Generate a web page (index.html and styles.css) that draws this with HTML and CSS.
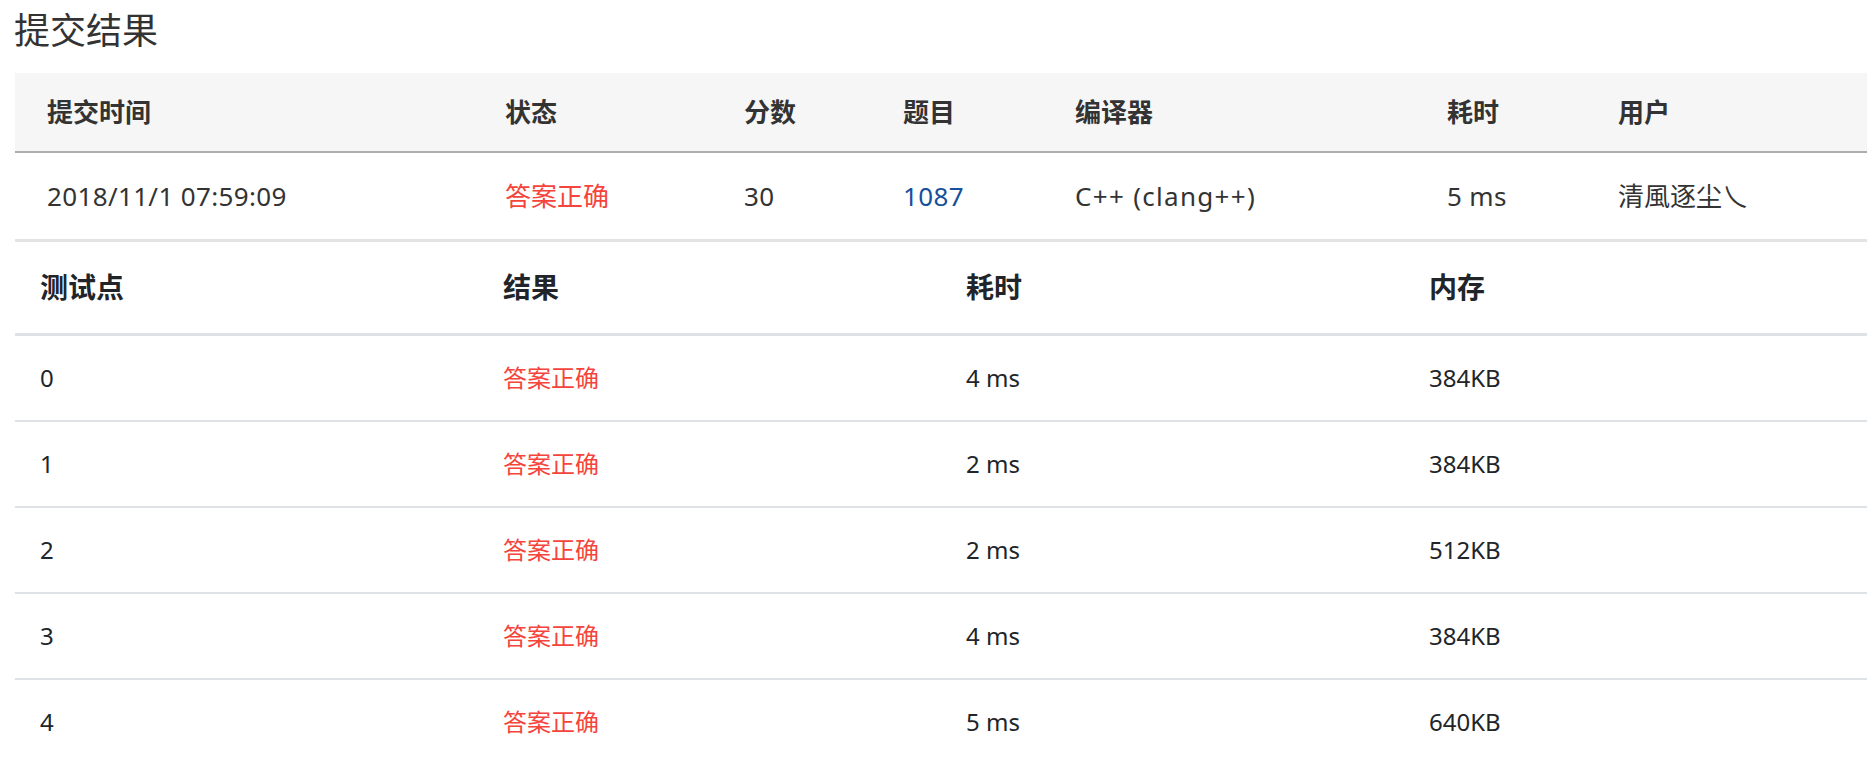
FILE: index.html
```html
<!DOCTYPE html>
<html lang="zh-CN">
<head>
<meta charset="utf-8">
<title>提交结果</title>
<link rel="stylesheet" href="styles.css">
</head>
<body>
<div class="page">
  <h1 class="title">提交结果</h1>
  <table class="submit-table">
    <colgroup>
      <col class="c1"><col class="c2"><col class="c3"><col class="c4"><col class="c5"><col class="c6"><col class="c7">
    </colgroup>
    <thead>
      <tr>
        <th>提交时间</th><th>状态</th><th>分数</th><th>题目</th><th>编译器</th><th>耗时</th><th>用户</th>
      </tr>
    </thead>
    <tbody>
      <tr>
        <td class="latin">2018/11/1 07:59:09</td>
        <td class="ok">答案正确</td>
        <td class="latin">30</td>
        <td class="latin"><a class="link" href="#">1087</a></td>
        <td class="compiler">C++ (clang++)</td>
        <td class="latin">5 ms</td>
        <td>清風逐尘乀</td>
      </tr>
    </tbody>
  </table>
  <table class="case-table">
    <thead>
      <tr><th>测试点</th><th>结果</th><th>耗时</th><th>内存</th></tr>
    </thead>
    <tbody>
      <tr><td>0</td><td class="ok">答案正确</td><td>4 ms</td><td>384KB</td></tr>
      <tr><td>1</td><td class="ok">答案正确</td><td>2 ms</td><td>384KB</td></tr>
      <tr><td>2</td><td class="ok">答案正确</td><td>2 ms</td><td>512KB</td></tr>
      <tr><td>3</td><td class="ok">答案正确</td><td>4 ms</td><td>384KB</td></tr>
      <tr><td>4</td><td class="ok">答案正确</td><td>5 ms</td><td>640KB</td></tr>
    </tbody>
  </table>
</div>
</body>
</html>
```

FILE: styles.css
```css
html, body {
  margin: 0;
  padding: 0;
  background: #ffffff;
}

body {
  font-family: "Noto Sans", "Noto Sans CJK SC", sans-serif;
  color: #333333;
}

.page {
  padding: 0 8px 0 15px;
}

.title {
  margin: 0 0 11px -1px;
  font-size: 36px;
  line-height: 62px;
  font-weight: 400;
  color: #333333;
}

table {
  width: 1852px;
  border-collapse: separate;
  border-spacing: 0;
  table-layout: fixed;
}

.submit-table .c1 { width: 458px; }
.submit-table .c2 { width: 239px; }
.submit-table .c3 { width: 159px; }
.submit-table .c4 { width: 172px; }
.submit-table .c5 { width: 372px; }
.submit-table .c6 { width: 171px; }
.submit-table .c7 { width: 281px; }

.submit-table th {
  text-align: left;
  font-size: 26px;
  font-weight: 700;
  line-height: 40px;
  padding: 19px 0 19px 32px;
  background: #f6f6f6;
  border-bottom: 2px solid #adadad;
  color: #333333;
}

.submit-table td {
  font-size: 26px;
  line-height: 40px;
  padding: 23px 0 23px 32px;
  border-bottom: 3px solid #e1e3e5;
  white-space: nowrap;
}

.submit-table td.latin {
  letter-spacing: 0.35px;
}

.submit-table td.compiler {
  letter-spacing: 1.3px;
}

.case-table th {
  text-align: left;
  font-size: 28px;
  font-weight: 700;
  line-height: 40px;
  padding: 25px 0 26px 25px;
  border-bottom: 3px solid #dee2e6;
  color: #212529;
}

.case-table td {
  font-size: 24px;
  line-height: 40px;
  padding: 22px 0 22px 25px;
  border-bottom: 2px solid #dee2e6;
  color: #212529;
}

.case-table tbody tr:last-child td {
  border-bottom: none;
}

.ok {
  color: #f5443b;
}

.case-table td.ok {
  color: #f5443b;
}

.link {
  color: #16509b;
  text-decoration: none;
}
```
